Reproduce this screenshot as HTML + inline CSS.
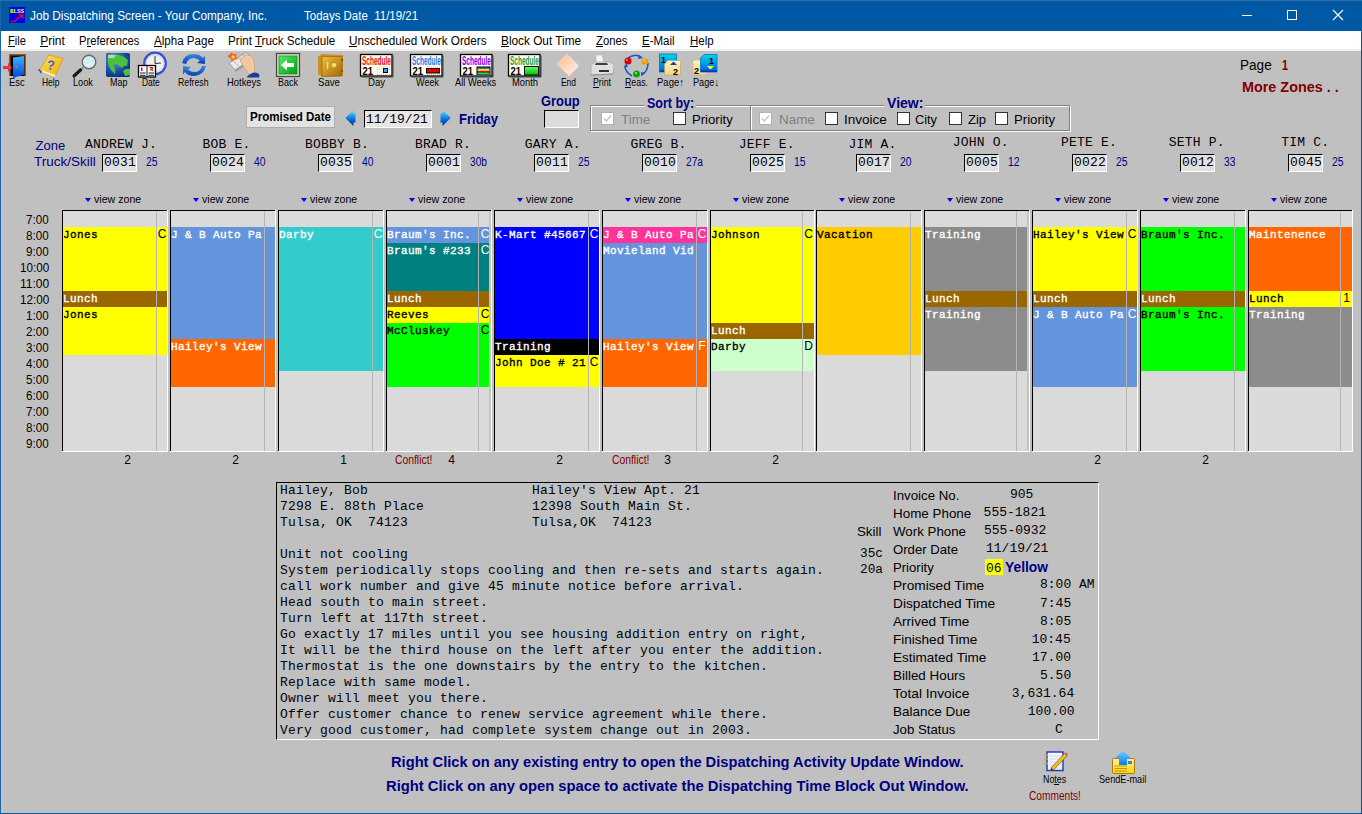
<!DOCTYPE html><html><head><meta charset="utf-8"><style>html,body{margin:0;padding:0;}body{width:1362px;height:814px;position:relative;overflow:hidden;background:#c0c0c0;font-family:"Liberation Sans",sans-serif;}body div,body svg{position:absolute;}</style></head><body><div style="left:0px;top:0px;width:1362px;height:31px;background:#0059a5;"></div><div style="left:0px;top:0px;width:1px;height:814px;background:#1c64a6;"></div><div style="left:1361px;top:0px;width:1px;height:814px;background:#0059a5;"></div><div style="left:0px;top:813px;width:1362px;height:1px;background:#0059a5;"></div><div style="left:0px;top:0px;width:1362px;height:1px;background:#2d6ea8;"></div><svg style="left:9px;top:7px" width="16" height="16" viewBox="0 0 17 17"><rect width="17" height="17" fill="#0000f0"/><text x="1" y="6.5" font-family="Liberation Mono" font-weight="bold" font-size="6.5" fill="#ffff00" textLength="15" lengthAdjust="spacingAndGlyphs">BLSS</text><path d="M1.5 15.5 L6 15.5 L12.5 9" stroke="#e00030" stroke-width="1.6" fill="none"/><path d="M9.5 7.5 L15.5 7.5 L15 13 Z" fill="#e00030"/></svg><div style="top:10px;font-family:'Liberation Sans', sans-serif;font-size:12px;line-height:12px;color:#fff;white-space:pre;left:30px;transform:scaleX(0.9826);transform-origin:0 0;">Job Dispatching Screen - Your Company, Inc.</div><div style="top:10px;font-family:'Liberation Sans', sans-serif;font-size:12px;line-height:12px;color:#fff;white-space:pre;left:304px;transform:scaleX(0.9569);transform-origin:0 0;">Todays Date  11/19/21</div><div style="left:1242px;top:15px;width:10px;height:1px;background:#fff;"></div><div style="left:1287px;top:10px;width:8px;height:8px;border:1px solid #fff"></div><svg style="left:1332px;top:9px" width="12" height="12" viewBox="0 0 12 12"><path d="M1 1 L11 11 M11 1 L1 11" stroke="#fff" stroke-width="1.1"/></svg><div style="left:1px;top:31px;width:1360px;height:18px;background:#fff;"></div><div style="left:1px;top:49px;width:1360px;height:2px;background:#f0f0f0;"></div><div style="top:35px;font-family:'Liberation Sans', sans-serif;font-size:12px;line-height:12px;color:#000;white-space:pre;left:8px;transform:scaleX(0.9254);transform-origin:0 0;">File</div><div style="left:8px;top:46px;width:7px;height:1px;background:#000;"></div><div style="top:35px;font-family:'Liberation Sans', sans-serif;font-size:12px;line-height:12px;color:#000;white-space:pre;left:40.2px;">Print</div><div style="left:40px;top:46px;width:8px;height:1px;background:#000;"></div><div style="top:35px;font-family:'Liberation Sans', sans-serif;font-size:12px;line-height:12px;color:#000;white-space:pre;left:79.3px;transform:scaleX(0.9322);transform-origin:0 0;">Preferences</div><div style="left:87px;top:46px;width:4px;height:1px;background:#000;"></div><div style="top:35px;font-family:'Liberation Sans', sans-serif;font-size:12px;line-height:12px;color:#000;white-space:pre;left:153.8px;transform:scaleX(0.9640);transform-origin:0 0;">Alpha Page</div><div style="left:154px;top:46px;width:8px;height:1px;background:#000;"></div><div style="top:35px;font-family:'Liberation Sans', sans-serif;font-size:12px;line-height:12px;color:#000;white-space:pre;left:227.9px;transform:scaleX(0.9693);transform-origin:0 0;">Print Truck Schedule</div><div style="left:255px;top:46px;width:7px;height:1px;background:#000;"></div><div style="top:35px;font-family:'Liberation Sans', sans-serif;font-size:12px;line-height:12px;color:#000;white-space:pre;left:349px;transform:scaleX(0.9741);transform-origin:0 0;">Unscheduled Work Orders</div><div style="left:349px;top:46px;width:8px;height:1px;background:#000;"></div><div style="top:35px;font-family:'Liberation Sans', sans-serif;font-size:12px;line-height:12px;color:#000;white-space:pre;left:501.3px;transform:scaleX(0.9847);transform-origin:0 0;">Block Out Time</div><div style="left:501px;top:46px;width:8px;height:1px;background:#000;"></div><div style="top:35px;font-family:'Liberation Sans', sans-serif;font-size:12px;line-height:12px;color:#000;white-space:pre;left:596px;transform:scaleX(0.9417);transform-origin:0 0;">Zones</div><div style="left:596px;top:46px;width:7px;height:1px;background:#000;"></div><div style="top:35px;font-family:'Liberation Sans', sans-serif;font-size:12px;line-height:12px;color:#000;white-space:pre;left:642.2px;transform:scaleX(0.9584);transform-origin:0 0;">E-Mail</div><div style="left:642px;top:46px;width:8px;height:1px;background:#000;"></div><div style="top:35px;font-family:'Liberation Sans', sans-serif;font-size:12px;line-height:12px;color:#000;white-space:pre;left:690.2px;transform:scaleX(0.9600);transform-origin:0 0;">Help</div><div style="left:690px;top:46px;width:8px;height:1px;background:#000;"></div><div style="top:77px;font-family:'Liberation Sans', sans-serif;font-size:11px;line-height:11px;color:#000;white-space:pre;left:8.60px;transform:scaleX(0.8504);transform-origin:0 0;">Esc</div><div style="top:77px;font-family:'Liberation Sans', sans-serif;font-size:11px;line-height:11px;color:#000;white-space:pre;left:41.60px;transform:scaleX(0.7691);transform-origin:0 0;">Help</div><div style="top:77px;font-family:'Liberation Sans', sans-serif;font-size:11px;line-height:11px;color:#000;white-space:pre;left:73.25px;transform:scaleX(0.8335);transform-origin:0 0;">Look</div><div style="top:77px;font-family:'Liberation Sans', sans-serif;font-size:11px;line-height:11px;color:#000;white-space:pre;left:109.70px;transform:scaleX(0.8128);transform-origin:0 0;">Map</div><div style="top:77px;font-family:'Liberation Sans', sans-serif;font-size:11px;line-height:11px;color:#000;white-space:pre;left:142.45px;transform:scaleX(0.7613);transform-origin:0 0;">Date</div><div style="top:77px;font-family:'Liberation Sans', sans-serif;font-size:11px;line-height:11px;color:#000;white-space:pre;left:178.40px;transform:scaleX(0.7942);transform-origin:0 0;">Refresh</div><div style="top:77px;font-family:'Liberation Sans', sans-serif;font-size:11px;line-height:11px;color:#000;white-space:pre;left:227.00px;transform:scaleX(0.8553);transform-origin:0 0;">Hotkeys</div><div style="top:77px;font-family:'Liberation Sans', sans-serif;font-size:11px;line-height:11px;color:#000;white-space:pre;left:278.00px;transform:scaleX(0.8174);transform-origin:0 0;">Back</div><div style="top:77px;font-family:'Liberation Sans', sans-serif;font-size:11px;line-height:11px;color:#000;white-space:pre;left:318.00px;transform:scaleX(0.8767);transform-origin:0 0;">Save</div><div style="top:77px;font-family:'Liberation Sans', sans-serif;font-size:11px;line-height:11px;color:#000;white-space:pre;left:368.00px;transform:scaleX(0.8690);transform-origin:0 0;">Day</div><div style="top:77px;font-family:'Liberation Sans', sans-serif;font-size:11px;line-height:11px;color:#000;white-space:pre;left:415.50px;transform:scaleX(0.8237);transform-origin:0 0;">Week</div><div style="top:77px;font-family:'Liberation Sans', sans-serif;font-size:11px;line-height:11px;color:#000;white-space:pre;left:455.40px;transform:scaleX(0.8459);transform-origin:0 0;">All Weeks</div><div style="top:77px;font-family:'Liberation Sans', sans-serif;font-size:11px;line-height:11px;color:#000;white-space:pre;left:512.00px;transform:scaleX(0.8498);transform-origin:0 0;">Month</div><div style="top:77px;font-family:'Liberation Sans', sans-serif;font-size:11px;line-height:11px;color:#000;white-space:pre;left:561.00px;transform:scaleX(0.7656);transform-origin:0 0;">End</div><div style="top:77px;font-family:'Liberation Sans', sans-serif;font-size:11px;line-height:11px;color:#000;white-space:pre;left:593.00px;transform:scaleX(0.7956);transform-origin:0 0;">Print</div><div style="top:77px;font-family:'Liberation Sans', sans-serif;font-size:11px;line-height:11px;color:#000;white-space:pre;left:625.00px;transform:scaleX(0.8000);transform-origin:0 0;">Reas.</div><div style="top:77px;font-family:'Liberation Sans', sans-serif;font-size:11px;line-height:11px;color:#000;white-space:pre;left:657.00px;transform:scaleX(0.8649);transform-origin:0 0;">Page↑</div><div style="top:77px;font-family:'Liberation Sans', sans-serif;font-size:11px;line-height:11px;color:#000;white-space:pre;left:693.00px;transform:scaleX(0.8328);transform-origin:0 0;">Page↓</div><div style="left:593px;top:87px;width:6px;height:1px;background:#000;"></div><div style="left:625px;top:87px;width:6px;height:1px;background:#000;"></div><svg style="left:0;top:50px" width="730" height="30" viewBox="0 50 730 30">
<defs>
<linearGradient id="gdoor" x1="0" y1="0" x2="0" y2="1"><stop offset="0" stop-color="#40b0ff"/><stop offset="1" stop-color="#0048d8"/></linearGradient>
<linearGradient id="gbook" x1="0" y1="0" x2="1" y2="1"><stop offset="0" stop-color="#ffe060"/><stop offset="1" stop-color="#f0b000"/></linearGradient>
<radialGradient id="gglobe" cx="0.35" cy="0.3" r="0.8"><stop offset="0" stop-color="#60a0e0"/><stop offset="0.6" stop-color="#1850a8"/><stop offset="1" stop-color="#0a2a70"/></radialGradient>
<linearGradient id="gref" x1="0" y1="0" x2="0" y2="1"><stop offset="0" stop-color="#3a8ae8"/><stop offset="1" stop-color="#0840b0"/></linearGradient>
<linearGradient id="ggreen" x1="0" y1="0" x2="1" y2="1"><stop offset="0" stop-color="#50f060"/><stop offset="1" stop-color="#00a018"/></linearGradient>
<linearGradient id="gsafe" x1="0" y1="0" x2="1" y2="1"><stop offset="0" stop-color="#f0c040"/><stop offset="1" stop-color="#a06808"/></linearGradient>
<linearGradient id="gend" x1="0" y1="0" x2="1" y2="1"><stop offset="0" stop-color="#ffc090"/><stop offset="1" stop-color="#fff0e8"/></linearGradient>
<linearGradient id="gpg1" x1="0" y1="0" x2="1" y2="1"><stop offset="0" stop-color="#00d8f0"/><stop offset="1" stop-color="#0060e0"/></linearGradient>
<linearGradient id="gpg2" x1="0" y1="0" x2="1" y2="1"><stop offset="0" stop-color="#fff0b0"/><stop offset="1" stop-color="#f8d880"/></linearGradient>
</defs>
<!-- Esc door -->
<rect x="9" y="54" width="17" height="22" fill="#a05a10"/>
<rect x="10.5" y="55.5" width="14" height="20.5" fill="#000"/>
<path d="M13 57.5 L24 56 L24 74.5 L13 78 Z" fill="url(#gdoor)"/>
<rect x="15.5" y="66" width="1.5" height="1.5" fill="#d09040"/>
<path d="M3 66 L8 66 L8 62.5 L12 67.5 L8 72 L8 69 L3 69 Z" fill="#f03040"/>
<!-- Help book -->
<path d="M49 55 L63 58.5 L54.5 77 L39 71 Z" fill="url(#gbook)" stroke="#d09000" stroke-width="0.6"/>
<path d="M39 71 L54.5 77 L55.5 75 L40 69.5 Z" fill="#f8f0d0"/>
<path d="M39 70 L41 74 L42 70.5 Z" fill="#2050e0"/>
<rect x="38.5" y="69" width="1.5" height="2" fill="#e02020"/>
<text x="47" y="69.5" font-family="Liberation Sans" font-weight="bold" font-size="13" fill="#4060f0" transform="rotate(8 51 64)">?</text>
<!-- Look magnifier -->
<circle cx="89" cy="62" r="6.8" fill="#d4ecf8" stroke="#6a6a6a" stroke-width="1.4"/>
<path d="M85 65 Q89 67 92 63" stroke="#f8f8f8" stroke-width="1" fill="none"/>
<path d="M83.5 67.5 L80 70.5" stroke="#909090" stroke-width="2"/>
<path d="M80.5 70 L74 76" stroke="#1a1a1a" stroke-width="3.2" stroke-linecap="round"/>
<!-- Map globe -->
<rect x="106" y="53" width="24" height="24" rx="2" fill="url(#gglobe)"/>
<path d="M108 58 Q112 54 119 55 Q124 56 128 60 L127 66 Q124 65 122 68 L119 66 Q117 63 113 65 Q116 69 115 74 L111 70 Q108 66 108 62 Z" fill="#4cc040"/>
<path d="M123 71 Q126 68 130 69 L130 75 L125 76 Z" fill="#4cc040"/>
<path d="M108 55 Q112 54 116 55 L114 58 Q110 58 108 58 Z" fill="#b0e0a0"/>
<!-- Date clock+calendar -->
<circle cx="155" cy="63.5" r="10.8" fill="#f0f0f0" stroke="#3a50d0" stroke-width="2.2"/>
<circle cx="155" cy="63.5" r="8.6" fill="none" stroke="#c8c8d8" stroke-width="0.8"/>
<path d="M155 56 L155 63.5 L161 63" stroke="#303030" stroke-width="1" fill="none"/>
<rect x="138.5" y="65.5" width="17" height="11.5" fill="#fff" stroke="#000" stroke-width="1.3"/>
<rect x="141" y="67.5" width="1.5" height="3.5" fill="#e00000"/>
<path d="M149.5 67.5 H152.5 V69 H150.5 V70 H152.5 V71" stroke="#e00000" stroke-width="1" fill="none"/>
<path d="M140 73 H145.5 M140 75.3 H145.5 M148.5 73 H154 M148.5 75.3 H154" stroke="#000" stroke-width="0.9"/>
<path d="M147 66 V77" stroke="#000" stroke-width="0.9"/>
<!-- Refresh -->
<path d="M182 63 Q184 54 194 54 Q200 54 203 58 L205 55.5 L205 64 L197 63 L200 60.5 Q197 58 193.5 58 Q188 58 186 64 Z" fill="url(#gref)"/>
<path d="M206 66 Q204 75 194 76 Q188 76 185 72 L183 74.5 L183 66 L191 67 L188 69.5 Q191 72 194.5 72 Q200 72 202 66 Z" fill="url(#gref)"/>
<!-- Hotkeys -->
<path d="M229 63 L246.5 52.5 L252.5 58.5 L235 70 Z" fill="#e8e8e8" stroke="#8a8a8a" stroke-width="0.7"/>
<path d="M235 70 L252.5 58.5 L252.5 61 L235.5 72 Z" fill="#9a9a9a"/>
<path d="M233 60.5 L239 66.5 M238 57.5 L244 63.5 M243 54.5 L249 60.5" stroke="#9a9a9a" stroke-width="0.7"/>
<path d="M227 56 L230 54.5 L231.5 52.5 L233.5 54.5 L236.5 53.5 L236 57 L238 59 L234 59.5 L231.5 61 L231 58.5 Z" fill="#ff5a10"/>
<circle cx="233" cy="57" r="1.8" fill="#ffd830"/>
<path d="M241 62 Q240 57.5 243.5 57 Q245 54 248.5 55 Q252.5 55.5 253.5 59.5 Q255.5 66 254.5 71 L250 75 Q246.5 72 245 68 Q242 65.5 241 62 Z" fill="#f2c8a0" stroke="#c49070" stroke-width="0.6"/>
<path d="M246.5 77.5 Q249 73.5 254.5 72.5 Q258.5 72.5 259.5 75 L259 77.5 Z" fill="#1a3c9c"/>
<!-- Back -->
<rect x="276.5" y="53.5" width="23" height="23" fill="#d0d8c0" stroke="#404840" stroke-width="1.2"/>
<rect x="279" y="56" width="18" height="18" fill="url(#ggreen)" stroke="#108010" stroke-width="0.6"/>
<path d="M281 65 L287 59.5 L287 63 L294 63 L294 67 L287 67 L287 70.5 Z" fill="#fff"/>
<!-- Save safe -->
<path d="M318 57 L322 54 L343 55 L343 76 L322 77 L318 74 Z" fill="#c89020"/>
<path d="M322 56.5 L342 56.5 L342 76 L322 76.5 Z" fill="url(#gsafe)" stroke="#905808" stroke-width="0.6"/>
<circle cx="334" cy="65" r="2.6" fill="#ffe070" stroke="#b08010" stroke-width="0.6"/>
<rect x="327" y="62" width="1.2" height="7" fill="#ffe880"/>
<rect x="341" y="59" width="2" height="2" fill="#805000"/>
<rect x="341" y="70" width="2" height="2" fill="#805000"/>
</svg>
<svg style="left:355px;top:50px" width="375" height="30" viewBox="355 50 375 30">
<defs>
<linearGradient id="gend2" x1="0" y1="0" x2="1" y2="1"><stop offset="0" stop-color="#ffbb88"/><stop offset="1" stop-color="#fff4ee"/></linearGradient>
<linearGradient id="gpga" x1="0" y1="0" x2="0" y2="1"><stop offset="0" stop-color="#00d8e8"/><stop offset="0.85" stop-color="#0070e0"/><stop offset="1" stop-color="#0000d0"/></linearGradient>
<linearGradient id="gpgb" x1="0" y1="0" x2="0" y2="1"><stop offset="0" stop-color="#fff4c0"/><stop offset="1" stop-color="#f4d480"/></linearGradient>
<linearGradient id="gmon" x1="0" y1="0" x2="0" y2="1"><stop offset="0" stop-color="#60ff60"/><stop offset="1" stop-color="#00c000"/></linearGradient>
</defs>
<!-- schedule icons -->
<g id="sch">
<rect x="360.5" y="54.5" width="31.5" height="21.5" fill="#fffcf0" stroke="#000" stroke-width="1.3"/>
<path d="M361.5 77 H393 V55.5" stroke="#404040" stroke-width="1" fill="none"/>
<text x="362" y="65" font-family="Liberation Sans" font-weight="bold" font-size="12" fill="#f01010" textLength="29" lengthAdjust="spacingAndGlyphs">Schedule</text>
<text x="362.5" y="74.5" font-family="Liberation Sans" font-weight="bold" font-size="11" fill="#000" textLength="10.5" lengthAdjust="spacingAndGlyphs">21</text>
<path d="M377 67 H390 M377 69.5 H390 M377 72 H390 M377 74.5 H390" stroke="#a0a0a0" stroke-width="0.6" stroke-dasharray="1 1"/>
<rect x="383.5" y="68.5" width="4" height="4" fill="#30a0ff" stroke="#000" stroke-width="1"/>
</g>
<rect x="410.5" y="54.5" width="31.5" height="21.5" fill="#fffcf0" stroke="#000" stroke-width="1.3"/>
<path d="M411.5 77 H443 V55.5" stroke="#404040" stroke-width="1" fill="none"/>
<text x="412" y="65" font-family="Liberation Sans" font-weight="bold" font-size="12" fill="#2080e8" textLength="29" lengthAdjust="spacingAndGlyphs">Schedule</text>
<text x="412.5" y="74.5" font-family="Liberation Sans" font-weight="bold" font-size="11" fill="#000" textLength="10.5" lengthAdjust="spacingAndGlyphs">21</text>
<path d="M427 67 H440 M427 74.5 H440" stroke="#a0a0a0" stroke-width="0.6" stroke-dasharray="1 1"/>
<rect x="426.5" y="68.5" width="13" height="4.5" fill="#e80000" stroke="#000" stroke-width="1"/>
<rect x="460.5" y="54.5" width="31.5" height="21.5" fill="#fffcf0" stroke="#000" stroke-width="1.3"/>
<path d="M461.5 77 H493 V55.5" stroke="#404040" stroke-width="1" fill="none"/>
<text x="462" y="65" font-family="Liberation Sans" font-weight="bold" font-size="12" fill="#8000f0" textLength="29" lengthAdjust="spacingAndGlyphs">Schedule</text>
<text x="462.5" y="74.5" font-family="Liberation Sans" font-weight="bold" font-size="11" fill="#000" textLength="10.5" lengthAdjust="spacingAndGlyphs">21</text>
<rect x="476.5" y="66.5" width="14" height="8.5" fill="#000"/>
<rect x="477.5" y="67.5" width="12" height="1.6" fill="#3070f0"/>
<rect x="477.5" y="69.1" width="12" height="1.8" fill="#ffff00"/>
<rect x="477.5" y="70.9" width="12" height="1.8" fill="#f00000"/>
<rect x="477.5" y="72.7" width="12" height="1.8" fill="#00f090"/>
<rect x="508.5" y="54.5" width="31.5" height="21.5" fill="#fffcf0" stroke="#000" stroke-width="1.3"/>
<path d="M509.5 77 H541 V55.5" stroke="#404040" stroke-width="1" fill="none"/>
<text x="510" y="65" font-family="Liberation Sans" font-weight="bold" font-size="12" fill="#20a040" textLength="29" lengthAdjust="spacingAndGlyphs">Schedule</text>
<text x="510.5" y="74.5" font-family="Liberation Sans" font-weight="bold" font-size="11" fill="#000" textLength="10.5" lengthAdjust="spacingAndGlyphs">21</text>
<rect x="524.5" y="66.5" width="14" height="8.5" fill="url(#gmon)" stroke="#000" stroke-width="1"/>
<!-- End -->
<path d="M567 54 L579 66 L569 76 L557 64 Z" fill="url(#gend2)" stroke="#f0d8c8" stroke-width="0.6"/>
<!-- Print -->
<path d="M596 55 L602 55 L604 63 L596 63 Z" fill="#f4f4f4" stroke="#b8b8b8" stroke-width="0.6"/>
<path d="M591 66 Q592 62 597 62 L610 62 Q614 63 614 67 L613 74 L591 75 Z" fill="#e0e0e0" stroke="#a0a0a0" stroke-width="0.7"/>
<path d="M596 63 L607 63 L608 65 L595 65 Z" fill="#404040"/>
<rect x="599" y="70" width="10" height="2" fill="#303030"/>
<path d="M591 75 L613 74" stroke="#909090" stroke-width="1"/>
<!-- Reas -->
<path d="M628 58 Q635 53 641 57 M648 63 Q648 71 642 75 M632 76 Q625 72 625 66" stroke="#1858d0" stroke-width="1.6" fill="none"/>
<path d="M639 55 L643 58 L638 59 Z M645 73 L641 76 L641 72 Z M624 67 L626 63 L628 67 Z" fill="#1858d0"/>
<circle cx="628" cy="61" r="3.5" fill="#d80000"/><circle cx="627" cy="60" r="1" fill="#ff8080"/>
<circle cx="645" cy="61.5" r="3.3" fill="#f0a000"/><circle cx="644.5" cy="60.5" r="1" fill="#ffe060"/>
<circle cx="636.5" cy="74" r="3.5" fill="#10a010"/><circle cx="636" cy="73" r="1" fill="#80ff80"/>
<!-- Page up -->
<rect x="659.5" y="54" width="17" height="18" fill="url(#gpga)" stroke="#0070c0" stroke-width="0.8"/>
<text x="661" y="63" font-family="Liberation Sans" font-weight="bold" font-size="9" fill="#000">1</text>
<path d="M668 60.5 L679.5 60.5 L680.5 61.5 L680.5 75 L664.5 75 L664.5 64 Z" fill="url(#gpgb)" stroke="#c0a060" stroke-width="0.6"/>
<path d="M670 65 L673.5 61.5 L677 65 Z" fill="#1040d0"/>
<text x="673" y="74.5" font-family="Liberation Sans" font-weight="bold" font-size="9" fill="#000">2</text>
<!-- Page down -->
<rect x="693" y="60" width="14" height="15" fill="url(#gpgb)" stroke="#d0b070" stroke-width="0.6"/>
<text x="694" y="74" font-family="Liberation Sans" font-weight="bold" font-size="9" fill="#000">2</text>
<path d="M704 54.5 L717 54.5 L717 72 L700.5 72 L700.5 58 Z" fill="url(#gpga)" stroke="#0070c0" stroke-width="0.8"/>
<text x="709" y="63.5" font-family="Liberation Sans" font-weight="bold" font-size="9" fill="#000">1</text>
<path d="M707 66 L714 66 L710.5 69.5 Z" fill="#ffff00"/>
</svg>
<svg style="left:1040px;top:748px" width="100" height="28" viewBox="1040 748 100 28">
<defs><linearGradient id="gmail" x1="0" y1="0" x2="0" y2="1"><stop offset="0" stop-color="#fff0a0"/><stop offset="1" stop-color="#ffd800"/></linearGradient>
<linearGradient id="garr" x1="0" y1="0" x2="0" y2="1"><stop offset="0" stop-color="#80d0ff"/><stop offset="1" stop-color="#0080e0"/></linearGradient></defs>
<!-- Notes -->
<rect x="1047" y="752" width="16" height="18.5" fill="#f4f8ff" stroke="#1838c0" stroke-width="1.4"/>
<path d="M1049 756 H1062 M1049 759 H1062 M1049 762 H1062 M1049 765 H1062 M1049 768 H1062" stroke="#b8c8f0" stroke-width="0.7"/>
<path d="M1044.5 755 H1048 M1044.5 759 H1048 M1044.5 763.5 H1048" stroke="#d0a020" stroke-width="1.4"/>
<path d="M1051 768 L1064.5 753.5 L1067 756 L1053.5 770 Z" fill="#f0c020" stroke="#704000" stroke-width="0.6"/>
<path d="M1064.5 753.5 L1066 752 L1068 754.5 L1067 756 Z" fill="#f06060"/>
<path d="M1051 768 L1050.5 770.5 L1053.5 770 Z" fill="#303030"/>
<!-- Send email -->
<rect x="1112.5" y="758.5" width="22" height="15" rx="1" fill="url(#gmail)" stroke="#a06000" stroke-width="0.8"/>
<path d="M1114.5 766 H1127 M1114.5 768.5 H1127 M1114.5 771 H1127" stroke="#b07010" stroke-width="0.7"/>
<rect x="1128" y="761" width="4" height="3" fill="#3080f0"/>
<path d="M1123 750 L1131 758.5 L1127 758.5 L1127 765 L1119 765 L1119 758.5 L1115 758.5 Z" fill="url(#garr)"/>
</svg>
<div style="top:58px;font-family:'Liberation Sans', sans-serif;font-size:14px;line-height:14px;color:#000;white-space:pre;left:1239.6px;transform:scaleX(0.9698);transform-origin:0 0;">Page</div><div style="top:58px;font-family:'Liberation Sans', sans-serif;font-size:14px;line-height:14px;color:#800000;white-space:pre;font-weight:bold;left:1281.7px;transform:scaleX(0.7711);transform-origin:0 0;">1</div><div style="top:80px;font-family:'Liberation Sans', sans-serif;font-size:14px;line-height:14px;color:#800000;white-space:pre;font-weight:bold;left:1241.7px;transform:scaleX(1.0277);transform-origin:0 0;">More Zones . .</div><div style="left:246px;top:106px;width:87px;height:20px;background:#e3e3e3;border:1px solid #adadad"></div><div style="top:111px;font-family:'Liberation Sans', sans-serif;font-size:12px;line-height:12px;color:#000;white-space:pre;font-weight:bold;left:250px;transform:scaleX(0.9641);transform-origin:0 0;">Promised Date</div><svg style="left:344px;top:109px" width="110" height="18" viewBox="344 109 110 18"><defs><linearGradient id="garw" x1="0" y1="0" x2="0" y2="1"><stop offset="0" stop-color="#50e8ff"/><stop offset="0.5" stop-color="#1080e0"/><stop offset="1" stop-color="#0020a0"/></linearGradient></defs><path d="M345.3 118 L353.5 110 L353.5 113.5 L355.5 113.5 L355.5 122.5 L353.5 122.5 L353.5 126 Z" fill="url(#garw)"/><path d="M450.8 118 L442.5 110 L442.5 113.5 L440.5 113.5 L440.5 122.5 L442.5 122.5 L442.5 126 Z" fill="url(#garw)"/></svg><div style="left:364px;top:110px;width:66px;height:16px;background:#e6e6e6;border-left:1px solid #000;border-top:1px solid #000;border-right:1px solid #fff;border-bottom:1px solid #fff"></div><div style="top:113px;font-family:'Liberation Mono', monospace;font-size:13px;line-height:13px;color:#000;white-space:pre;left:366.4px;transform:scaleX(0.9908);transform-origin:0 0;">11/19/21</div><div style="top:112px;font-family:'Liberation Sans', sans-serif;font-size:14px;line-height:14px;color:#000080;white-space:pre;font-weight:bold;left:459.4px;transform:scaleX(0.9310);transform-origin:0 0;">Friday</div><div style="top:94px;font-family:'Liberation Sans', sans-serif;font-size:14px;line-height:14px;color:#000080;white-space:pre;font-weight:bold;left:541px;transform:scaleX(0.9218);transform-origin:0 0;">Group</div><div style="left:544px;top:110px;width:33px;height:16px;background:#dcdcdc;border-left:1px solid #000;border-top:1px solid #000;border-right:1px solid #fff;border-bottom:1px solid #fff"></div><div style="left:590px;top:105px;width:159px;height:24px;border:1px solid #808080;box-shadow:1px 1px 0 #fff, inset 1px 1px 0 #fff"></div><div style="left:750px;top:105px;width:318px;height:24px;border:1px solid #808080;box-shadow:1px 1px 0 #fff, inset 1px 1px 0 #fff"></div><div style="left:644px;top:100px;width:52px;height:8px;background:#c0c0c0;"></div><div style="top:96px;font-family:'Liberation Sans', sans-serif;font-size:14px;line-height:14px;color:#000080;white-space:pre;font-weight:bold;left:646.5px;transform:scaleX(0.8927);transform-origin:0 0;">Sort by:</div><div style="left:884px;top:100px;width:41px;height:8px;background:#c0c0c0;"></div><div style="top:96px;font-family:'Liberation Sans', sans-serif;font-size:14px;line-height:14px;color:#000080;white-space:pre;font-weight:bold;left:886.5px;transform:scaleX(1.0052);transform-origin:0 0;">View:</div><div style="left:601px;top:112px;width:11px;height:11px;background:#fff;border:1px solid #b0b0b0"></div><svg style="left:602px;top:113px" width="11" height="11" viewBox="0 0 11 11"><path d="M2 5.5 L4.5 8 L9 2.5" stroke="#c4c4c4" stroke-width="1.3" fill="none"/></svg><div style="top:113px;font-family:'Liberation Sans', sans-serif;font-size:13px;line-height:13px;color:#808080;white-space:pre;left:620.8px;transform:scaleX(1.0279);transform-origin:0 0;">Time</div><div style="left:673px;top:112px;width:11px;height:11px;background:#fff;border:1px solid #333"></div><div style="top:113px;font-family:'Liberation Sans', sans-serif;font-size:13px;line-height:13px;color:#000;white-space:pre;left:692px;transform:scaleX(1.0086);transform-origin:0 0;">Priority</div><div style="left:759px;top:112px;width:11px;height:11px;background:#fff;border:1px solid #b0b0b0"></div><svg style="left:760px;top:113px" width="11" height="11" viewBox="0 0 11 11"><path d="M2 5.5 L4.5 8 L9 2.5" stroke="#c4c4c4" stroke-width="1.3" fill="none"/></svg><div style="top:113px;font-family:'Liberation Sans', sans-serif;font-size:13px;line-height:13px;color:#808080;white-space:pre;left:778.6px;transform:scaleX(1.0321);transform-origin:0 0;">Name</div><div style="left:825px;top:112px;width:11px;height:11px;background:#fff;border:1px solid #333"></div><div style="top:113px;font-family:'Liberation Sans', sans-serif;font-size:13px;line-height:13px;color:#000;white-space:pre;left:843.6px;transform:scaleX(1.0412);transform-origin:0 0;">Invoice</div><div style="left:897px;top:112px;width:11px;height:11px;background:#fff;border:1px solid #333"></div><div style="top:113px;font-family:'Liberation Sans', sans-serif;font-size:13px;line-height:13px;color:#000;white-space:pre;left:915px;transform:scaleX(0.9826);transform-origin:0 0;">City</div><div style="left:949px;top:112px;width:11px;height:11px;background:#fff;border:1px solid #333"></div><div style="top:113px;font-family:'Liberation Sans', sans-serif;font-size:13px;line-height:13px;color:#000;white-space:pre;left:968px;">Zip</div><div style="left:995px;top:112px;width:11px;height:11px;background:#fff;border:1px solid #333"></div><div style="top:113px;font-family:'Liberation Sans', sans-serif;font-size:13px;line-height:13px;color:#000;white-space:pre;left:1014px;transform:scaleX(1.0135);transform-origin:0 0;">Priority</div><div style="top:139px;font-family:'Liberation Sans', sans-serif;font-size:13px;line-height:13px;color:#000080;white-space:pre;left:35.5px;">Zone</div><div style="top:155px;font-family:'Liberation Sans', sans-serif;font-size:13px;line-height:13px;color:#000080;white-space:pre;left:33.6px;transform:scaleX(1.0375);transform-origin:0 0;">Truck/Skill</div><div style="top:138px;font-family:'Liberation Mono', monospace;font-size:13px;line-height:13px;color:#000;white-space:pre;letter-spacing:0.2px;left:85.1px;">ANDREW J.</div><div style="left:102px;top:154px;width:33px;height:16px;background:#e0e0e0;border-left:1px solid #000;border-top:1px solid #000;border-right:1px solid #fff;border-bottom:1px solid #fff"></div><div style="top:156px;font-family:'Liberation Mono', monospace;font-size:13px;line-height:13px;color:#000;white-space:pre;letter-spacing:0.2px;left:104px;">0031</div><div style="top:156px;font-family:'Liberation Sans', sans-serif;font-size:12px;line-height:12px;color:#000080;white-space:pre;left:146px;transform:scaleX(0.8618);transform-origin:0 0;">25</div><svg style="left:85px;top:198px" width="6" height="4" viewBox="0 0 6 4"><path d="M0 0 L6 0 L3 4 Z" fill="#0000ff"/></svg><div style="top:194px;font-family:'Liberation Sans', sans-serif;font-size:11px;line-height:11px;color:#000;white-space:pre;left:94px;transform:scaleX(0.9645);transform-origin:0 0;">view zone</div><div style="top:138px;font-family:'Liberation Mono', monospace;font-size:13px;line-height:13px;color:#000;white-space:pre;letter-spacing:0.2px;left:202.5px;">BOB E.</div><div style="left:210px;top:154px;width:33px;height:16px;background:#e0e0e0;border-left:1px solid #000;border-top:1px solid #000;border-right:1px solid #fff;border-bottom:1px solid #fff"></div><div style="top:156px;font-family:'Liberation Mono', monospace;font-size:13px;line-height:13px;color:#000;white-space:pre;letter-spacing:0.2px;left:212px;">0024</div><div style="top:156px;font-family:'Liberation Sans', sans-serif;font-size:12px;line-height:12px;color:#000080;white-space:pre;left:254px;transform:scaleX(0.8618);transform-origin:0 0;">40</div><svg style="left:193px;top:198px" width="6" height="4" viewBox="0 0 6 4"><path d="M0 0 L6 0 L3 4 Z" fill="#0000ff"/></svg><div style="top:194px;font-family:'Liberation Sans', sans-serif;font-size:11px;line-height:11px;color:#000;white-space:pre;left:202px;transform:scaleX(0.9645);transform-origin:0 0;">view zone</div><div style="top:138px;font-family:'Liberation Mono', monospace;font-size:13px;line-height:13px;color:#000;white-space:pre;letter-spacing:0.2px;left:304.9px;">BOBBY B.</div><div style="left:318px;top:154px;width:33px;height:16px;background:#e0e0e0;border-left:1px solid #000;border-top:1px solid #000;border-right:1px solid #fff;border-bottom:1px solid #fff"></div><div style="top:156px;font-family:'Liberation Mono', monospace;font-size:13px;line-height:13px;color:#000;white-space:pre;letter-spacing:0.2px;left:320px;">0035</div><div style="top:156px;font-family:'Liberation Sans', sans-serif;font-size:12px;line-height:12px;color:#000080;white-space:pre;left:362px;transform:scaleX(0.8618);transform-origin:0 0;">40</div><svg style="left:301px;top:198px" width="6" height="4" viewBox="0 0 6 4"><path d="M0 0 L6 0 L3 4 Z" fill="#0000ff"/></svg><div style="top:194px;font-family:'Liberation Sans', sans-serif;font-size:11px;line-height:11px;color:#000;white-space:pre;left:310px;transform:scaleX(0.9645);transform-origin:0 0;">view zone</div><div style="top:138px;font-family:'Liberation Mono', monospace;font-size:13px;line-height:13px;color:#000;white-space:pre;letter-spacing:0.2px;left:415px;">BRAD R.</div><div style="left:426px;top:154px;width:33px;height:16px;background:#e0e0e0;border-left:1px solid #000;border-top:1px solid #000;border-right:1px solid #fff;border-bottom:1px solid #fff"></div><div style="top:156px;font-family:'Liberation Mono', monospace;font-size:13px;line-height:13px;color:#000;white-space:pre;letter-spacing:0.2px;left:428px;">0001</div><div style="top:156px;font-family:'Liberation Sans', sans-serif;font-size:12px;line-height:12px;color:#000080;white-space:pre;left:470px;transform:scaleX(0.8493);transform-origin:0 0;">30b</div><svg style="left:409px;top:198px" width="6" height="4" viewBox="0 0 6 4"><path d="M0 0 L6 0 L3 4 Z" fill="#0000ff"/></svg><div style="top:194px;font-family:'Liberation Sans', sans-serif;font-size:11px;line-height:11px;color:#000;white-space:pre;left:418px;transform:scaleX(0.9645);transform-origin:0 0;">view zone</div><div style="top:138px;font-family:'Liberation Mono', monospace;font-size:13px;line-height:13px;color:#000;white-space:pre;letter-spacing:0.2px;left:524.7px;">GARY A.</div><div style="left:534px;top:154px;width:33px;height:16px;background:#e0e0e0;border-left:1px solid #000;border-top:1px solid #000;border-right:1px solid #fff;border-bottom:1px solid #fff"></div><div style="top:156px;font-family:'Liberation Mono', monospace;font-size:13px;line-height:13px;color:#000;white-space:pre;letter-spacing:0.2px;left:536px;">0011</div><div style="top:156px;font-family:'Liberation Sans', sans-serif;font-size:12px;line-height:12px;color:#000080;white-space:pre;left:578px;transform:scaleX(0.8618);transform-origin:0 0;">25</div><svg style="left:517px;top:198px" width="6" height="4" viewBox="0 0 6 4"><path d="M0 0 L6 0 L3 4 Z" fill="#0000ff"/></svg><div style="top:194px;font-family:'Liberation Sans', sans-serif;font-size:11px;line-height:11px;color:#000;white-space:pre;left:526px;transform:scaleX(0.9645);transform-origin:0 0;">view zone</div><div style="top:138px;font-family:'Liberation Mono', monospace;font-size:13px;line-height:13px;color:#000;white-space:pre;letter-spacing:0.2px;left:630.4px;">GREG B.</div><div style="left:642px;top:154px;width:33px;height:16px;background:#e0e0e0;border-left:1px solid #000;border-top:1px solid #000;border-right:1px solid #fff;border-bottom:1px solid #fff"></div><div style="top:156px;font-family:'Liberation Mono', monospace;font-size:13px;line-height:13px;color:#000;white-space:pre;letter-spacing:0.2px;left:644px;">0010</div><div style="top:156px;font-family:'Liberation Sans', sans-serif;font-size:12px;line-height:12px;color:#000080;white-space:pre;left:686px;transform:scaleX(0.8493);transform-origin:0 0;">27a</div><svg style="left:625px;top:198px" width="6" height="4" viewBox="0 0 6 4"><path d="M0 0 L6 0 L3 4 Z" fill="#0000ff"/></svg><div style="top:194px;font-family:'Liberation Sans', sans-serif;font-size:11px;line-height:11px;color:#000;white-space:pre;left:634px;transform:scaleX(0.9645);transform-origin:0 0;">view zone</div><div style="top:138px;font-family:'Liberation Mono', monospace;font-size:13px;line-height:13px;color:#000;white-space:pre;letter-spacing:0.2px;left:738.8px;">JEFF E.</div><div style="left:750px;top:154px;width:33px;height:16px;background:#e0e0e0;border-left:1px solid #000;border-top:1px solid #000;border-right:1px solid #fff;border-bottom:1px solid #fff"></div><div style="top:156px;font-family:'Liberation Mono', monospace;font-size:13px;line-height:13px;color:#000;white-space:pre;letter-spacing:0.2px;left:752px;">0025</div><div style="top:156px;font-family:'Liberation Sans', sans-serif;font-size:12px;line-height:12px;color:#000080;white-space:pre;left:794px;transform:scaleX(0.8618);transform-origin:0 0;">15</div><svg style="left:733px;top:198px" width="6" height="4" viewBox="0 0 6 4"><path d="M0 0 L6 0 L3 4 Z" fill="#0000ff"/></svg><div style="top:194px;font-family:'Liberation Sans', sans-serif;font-size:11px;line-height:11px;color:#000;white-space:pre;left:742px;transform:scaleX(0.9645);transform-origin:0 0;">view zone</div><div style="top:138px;font-family:'Liberation Mono', monospace;font-size:13px;line-height:13px;color:#000;white-space:pre;letter-spacing:0.2px;left:848.5px;">JIM A.</div><div style="left:856px;top:154px;width:33px;height:16px;background:#e0e0e0;border-left:1px solid #000;border-top:1px solid #000;border-right:1px solid #fff;border-bottom:1px solid #fff"></div><div style="top:156px;font-family:'Liberation Mono', monospace;font-size:13px;line-height:13px;color:#000;white-space:pre;letter-spacing:0.2px;left:858px;">0017</div><div style="top:156px;font-family:'Liberation Sans', sans-serif;font-size:12px;line-height:12px;color:#000080;white-space:pre;left:900px;transform:scaleX(0.8618);transform-origin:0 0;">20</div><svg style="left:839px;top:198px" width="6" height="4" viewBox="0 0 6 4"><path d="M0 0 L6 0 L3 4 Z" fill="#0000ff"/></svg><div style="top:194px;font-family:'Liberation Sans', sans-serif;font-size:11px;line-height:11px;color:#000;white-space:pre;left:848px;transform:scaleX(0.9645);transform-origin:0 0;">view zone</div><div style="top:136px;font-family:'Liberation Mono', monospace;font-size:13px;line-height:13px;color:#000;white-space:pre;letter-spacing:0.2px;left:952.8px;">JOHN O.</div><div style="left:964px;top:154px;width:33px;height:16px;background:#e0e0e0;border-left:1px solid #000;border-top:1px solid #000;border-right:1px solid #fff;border-bottom:1px solid #fff"></div><div style="top:156px;font-family:'Liberation Mono', monospace;font-size:13px;line-height:13px;color:#000;white-space:pre;letter-spacing:0.2px;left:966px;">0005</div><div style="top:156px;font-family:'Liberation Sans', sans-serif;font-size:12px;line-height:12px;color:#000080;white-space:pre;left:1008px;transform:scaleX(0.8618);transform-origin:0 0;">12</div><svg style="left:947px;top:198px" width="6" height="4" viewBox="0 0 6 4"><path d="M0 0 L6 0 L3 4 Z" fill="#0000ff"/></svg><div style="top:194px;font-family:'Liberation Sans', sans-serif;font-size:11px;line-height:11px;color:#000;white-space:pre;left:956px;transform:scaleX(0.9645);transform-origin:0 0;">view zone</div><div style="top:136px;font-family:'Liberation Mono', monospace;font-size:13px;line-height:13px;color:#000;white-space:pre;letter-spacing:0.2px;left:1060.9px;">PETE E.</div><div style="left:1072px;top:154px;width:33px;height:16px;background:#e0e0e0;border-left:1px solid #000;border-top:1px solid #000;border-right:1px solid #fff;border-bottom:1px solid #fff"></div><div style="top:156px;font-family:'Liberation Mono', monospace;font-size:13px;line-height:13px;color:#000;white-space:pre;letter-spacing:0.2px;left:1074px;">0022</div><div style="top:156px;font-family:'Liberation Sans', sans-serif;font-size:12px;line-height:12px;color:#000080;white-space:pre;left:1116px;transform:scaleX(0.8618);transform-origin:0 0;">25</div><svg style="left:1055px;top:198px" width="6" height="4" viewBox="0 0 6 4"><path d="M0 0 L6 0 L3 4 Z" fill="#0000ff"/></svg><div style="top:194px;font-family:'Liberation Sans', sans-serif;font-size:11px;line-height:11px;color:#000;white-space:pre;left:1064px;transform:scaleX(0.9645);transform-origin:0 0;">view zone</div><div style="top:136px;font-family:'Liberation Mono', monospace;font-size:13px;line-height:13px;color:#000;white-space:pre;letter-spacing:0.2px;left:1168.8px;">SETH P.</div><div style="left:1180px;top:154px;width:33px;height:16px;background:#e0e0e0;border-left:1px solid #000;border-top:1px solid #000;border-right:1px solid #fff;border-bottom:1px solid #fff"></div><div style="top:156px;font-family:'Liberation Mono', monospace;font-size:13px;line-height:13px;color:#000;white-space:pre;letter-spacing:0.2px;left:1182px;">0012</div><div style="top:156px;font-family:'Liberation Sans', sans-serif;font-size:12px;line-height:12px;color:#000080;white-space:pre;left:1224px;transform:scaleX(0.8618);transform-origin:0 0;">33</div><svg style="left:1163px;top:198px" width="6" height="4" viewBox="0 0 6 4"><path d="M0 0 L6 0 L3 4 Z" fill="#0000ff"/></svg><div style="top:194px;font-family:'Liberation Sans', sans-serif;font-size:11px;line-height:11px;color:#000;white-space:pre;left:1172px;transform:scaleX(0.9645);transform-origin:0 0;">view zone</div><div style="top:136px;font-family:'Liberation Mono', monospace;font-size:13px;line-height:13px;color:#000;white-space:pre;letter-spacing:0.2px;left:1281.2px;">TIM C.</div><div style="left:1288px;top:154px;width:33px;height:16px;background:#e0e0e0;border-left:1px solid #000;border-top:1px solid #000;border-right:1px solid #fff;border-bottom:1px solid #fff"></div><div style="top:156px;font-family:'Liberation Mono', monospace;font-size:13px;line-height:13px;color:#000;white-space:pre;letter-spacing:0.2px;left:1290px;">0045</div><div style="top:156px;font-family:'Liberation Sans', sans-serif;font-size:12px;line-height:12px;color:#000080;white-space:pre;left:1332px;transform:scaleX(0.8618);transform-origin:0 0;">25</div><svg style="left:1271px;top:198px" width="6" height="4" viewBox="0 0 6 4"><path d="M0 0 L6 0 L3 4 Z" fill="#0000ff"/></svg><div style="top:194px;font-family:'Liberation Sans', sans-serif;font-size:11px;line-height:11px;color:#000;white-space:pre;left:1280px;transform:scaleX(0.9645);transform-origin:0 0;">view zone</div><div style="top:213px;font-family:'Liberation Sans', sans-serif;font-size:13px;line-height:13px;color:#000;white-space:pre;left:26.40px;transform:scaleX(0.8928);transform-origin:0 0;">7:00</div><div style="top:229px;font-family:'Liberation Sans', sans-serif;font-size:13px;line-height:13px;color:#000;white-space:pre;left:26.40px;transform:scaleX(0.8928);transform-origin:0 0;">8:00</div><div style="top:245px;font-family:'Liberation Sans', sans-serif;font-size:13px;line-height:13px;color:#000;white-space:pre;left:26.40px;transform:scaleX(0.8928);transform-origin:0 0;">9:00</div><div style="top:261px;font-family:'Liberation Sans', sans-serif;font-size:13px;line-height:13px;color:#000;white-space:pre;left:19.80px;transform:scaleX(0.8972);transform-origin:0 0;">10:00</div><div style="top:277px;font-family:'Liberation Sans', sans-serif;font-size:13px;line-height:13px;color:#000;white-space:pre;left:19.80px;transform:scaleX(0.9247);transform-origin:0 0;">11:00</div><div style="top:293px;font-family:'Liberation Sans', sans-serif;font-size:13px;line-height:13px;color:#000;white-space:pre;left:19.80px;transform:scaleX(0.8972);transform-origin:0 0;">12:00</div><div style="top:309px;font-family:'Liberation Sans', sans-serif;font-size:13px;line-height:13px;color:#000;white-space:pre;left:26.40px;transform:scaleX(0.8928);transform-origin:0 0;">1:00</div><div style="top:325px;font-family:'Liberation Sans', sans-serif;font-size:13px;line-height:13px;color:#000;white-space:pre;left:26.40px;transform:scaleX(0.8928);transform-origin:0 0;">2:00</div><div style="top:341px;font-family:'Liberation Sans', sans-serif;font-size:13px;line-height:13px;color:#000;white-space:pre;left:26.40px;transform:scaleX(0.8928);transform-origin:0 0;">3:00</div><div style="top:357px;font-family:'Liberation Sans', sans-serif;font-size:13px;line-height:13px;color:#000;white-space:pre;left:26.40px;transform:scaleX(0.8928);transform-origin:0 0;">4:00</div><div style="top:373px;font-family:'Liberation Sans', sans-serif;font-size:13px;line-height:13px;color:#000;white-space:pre;left:26.40px;transform:scaleX(0.8928);transform-origin:0 0;">5:00</div><div style="top:389px;font-family:'Liberation Sans', sans-serif;font-size:13px;line-height:13px;color:#000;white-space:pre;left:26.40px;transform:scaleX(0.8928);transform-origin:0 0;">6:00</div><div style="top:405px;font-family:'Liberation Sans', sans-serif;font-size:13px;line-height:13px;color:#000;white-space:pre;left:26.40px;transform:scaleX(0.8928);transform-origin:0 0;">7:00</div><div style="top:421px;font-family:'Liberation Sans', sans-serif;font-size:13px;line-height:13px;color:#000;white-space:pre;left:26.40px;transform:scaleX(0.8928);transform-origin:0 0;">8:00</div><div style="top:437px;font-family:'Liberation Sans', sans-serif;font-size:13px;line-height:13px;color:#000;white-space:pre;left:26.40px;transform:scaleX(0.8928);transform-origin:0 0;">9:00</div><div style="left:62px;top:210px;width:105px;height:1px;background:#000;"></div><div style="left:62px;top:210px;width:1px;height:241px;background:#000;"></div><div style="left:167px;top:210px;width:1px;height:242px;background:#fff;"></div><div style="left:62px;top:451px;width:106px;height:1px;background:#fff;"></div><div style="left:63px;top:211px;width:104px;height:240px;background:#dadada;"></div><div style="left:63px;top:227px;width:104px;height:128px;background:#ffff00;"></div><div style="left:63px;top:291px;width:104px;height:16px;background:#996600;"></div><div style="left:156px;top:211px;width:1px;height:240px;background:#b4b4b4;"></div><div style="top:230px;font-family:'Liberation Mono', monospace;font-size:11px;line-height:11px;color:#000;white-space:pre;letter-spacing:0.4px;left:63px;-webkit-text-stroke:0.35px #000;">Jones</div><div style="top:228px;font-family:'Liberation Sans', sans-serif;font-size:12px;line-height:12px;color:#000;white-space:pre;left:157.66px;">C</div><div style="top:294px;font-family:'Liberation Mono', monospace;font-size:11px;line-height:11px;color:#fff;white-space:pre;letter-spacing:0.4px;left:63px;-webkit-text-stroke:0.35px #fff;">Lunch</div><div style="top:310px;font-family:'Liberation Mono', monospace;font-size:11px;line-height:11px;color:#000;white-space:pre;letter-spacing:0.4px;left:63px;-webkit-text-stroke:0.35px #000;">Jones</div><div style="left:170px;top:210px;width:105px;height:1px;background:#000;"></div><div style="left:170px;top:210px;width:1px;height:241px;background:#000;"></div><div style="left:275px;top:210px;width:1px;height:242px;background:#fff;"></div><div style="left:170px;top:451px;width:106px;height:1px;background:#fff;"></div><div style="left:171px;top:211px;width:104px;height:240px;background:#dadada;"></div><div style="left:171px;top:227px;width:104px;height:112px;background:#6495dc;"></div><div style="left:171px;top:339px;width:104px;height:48px;background:#ff6600;"></div><div style="left:264px;top:211px;width:1px;height:240px;background:#b4b4b4;"></div><div style="top:230px;font-family:'Liberation Mono', monospace;font-size:11px;line-height:11px;color:#fff;white-space:pre;letter-spacing:0.4px;left:171px;-webkit-text-stroke:0.35px #fff;">J &amp; B Auto Pa</div><div style="top:342px;font-family:'Liberation Mono', monospace;font-size:11px;line-height:11px;color:#fff;white-space:pre;letter-spacing:0.4px;left:171px;-webkit-text-stroke:0.35px #fff;">Hailey&#x27;s View</div><div style="left:278px;top:210px;width:105px;height:1px;background:#000;"></div><div style="left:278px;top:210px;width:1px;height:241px;background:#000;"></div><div style="left:383px;top:210px;width:1px;height:242px;background:#fff;"></div><div style="left:278px;top:451px;width:106px;height:1px;background:#fff;"></div><div style="left:279px;top:211px;width:104px;height:240px;background:#dadada;"></div><div style="left:279px;top:227px;width:104px;height:144px;background:#33cccc;"></div><div style="left:372px;top:211px;width:1px;height:240px;background:#b4b4b4;"></div><div style="top:230px;font-family:'Liberation Mono', monospace;font-size:11px;line-height:11px;color:#fff;white-space:pre;letter-spacing:0.4px;left:279px;-webkit-text-stroke:0.35px #fff;">Darby</div><div style="top:228px;font-family:'Liberation Sans', sans-serif;font-size:12px;line-height:12px;color:#fff;white-space:pre;left:373.66px;">C</div><div style="left:386px;top:210px;width:105px;height:1px;background:#000;"></div><div style="left:386px;top:210px;width:1px;height:241px;background:#000;"></div><div style="left:491px;top:210px;width:1px;height:242px;background:#fff;"></div><div style="left:386px;top:451px;width:106px;height:1px;background:#fff;"></div><div style="left:489px;top:211px;width:2px;height:240px;background:#c4c4c4;"></div><div style="left:387px;top:211px;width:102px;height:240px;background:#dadada;"></div><div style="left:387px;top:227px;width:102px;height:16px;background:#6495dc;"></div><div style="left:387px;top:243px;width:102px;height:48px;background:#008080;"></div><div style="left:387px;top:291px;width:102px;height:16px;background:#996600;"></div><div style="left:387px;top:307px;width:102px;height:16px;background:#ffff00;"></div><div style="left:387px;top:323px;width:102px;height:64px;background:#00ff00;"></div><div style="left:478px;top:211px;width:1px;height:240px;background:#b4b4b4;"></div><div style="top:230px;font-family:'Liberation Mono', monospace;font-size:11px;line-height:11px;color:#fff;white-space:pre;letter-spacing:0.4px;left:387px;-webkit-text-stroke:0.35px #fff;">Braum&#x27;s Inc.</div><div style="top:228px;font-family:'Liberation Sans', sans-serif;font-size:12px;line-height:12px;color:#fff;white-space:pre;left:480.66px;">C</div><div style="top:246px;font-family:'Liberation Mono', monospace;font-size:11px;line-height:11px;color:#fff;white-space:pre;letter-spacing:0.4px;left:387px;-webkit-text-stroke:0.35px #fff;">Braum&#x27;s #233</div><div style="top:244px;font-family:'Liberation Sans', sans-serif;font-size:12px;line-height:12px;color:#fff;white-space:pre;left:480.66px;">C</div><div style="top:294px;font-family:'Liberation Mono', monospace;font-size:11px;line-height:11px;color:#fff;white-space:pre;letter-spacing:0.4px;left:387px;-webkit-text-stroke:0.35px #fff;">Lunch</div><div style="top:310px;font-family:'Liberation Mono', monospace;font-size:11px;line-height:11px;color:#000;white-space:pre;letter-spacing:0.4px;left:387px;-webkit-text-stroke:0.35px #000;">Reeves</div><div style="top:308px;font-family:'Liberation Sans', sans-serif;font-size:12px;line-height:12px;color:#000;white-space:pre;left:480.66px;">C</div><div style="top:326px;font-family:'Liberation Mono', monospace;font-size:11px;line-height:11px;color:#000;white-space:pre;letter-spacing:0.4px;left:387px;-webkit-text-stroke:0.35px #000;">McCluskey</div><div style="top:324px;font-family:'Liberation Sans', sans-serif;font-size:12px;line-height:12px;color:#000;white-space:pre;left:480.66px;">C</div><div style="left:494px;top:210px;width:105px;height:1px;background:#000;"></div><div style="left:494px;top:210px;width:1px;height:241px;background:#000;"></div><div style="left:599px;top:210px;width:1px;height:242px;background:#fff;"></div><div style="left:494px;top:451px;width:106px;height:1px;background:#fff;"></div><div style="left:495px;top:211px;width:104px;height:240px;background:#dadada;"></div><div style="left:495px;top:227px;width:104px;height:112px;background:#0000ff;"></div><div style="left:495px;top:339px;width:104px;height:16px;background:#000000;"></div><div style="left:495px;top:355px;width:104px;height:32px;background:#ffff00;"></div><div style="left:588px;top:211px;width:1px;height:240px;background:#b4b4b4;"></div><div style="top:230px;font-family:'Liberation Mono', monospace;font-size:11px;line-height:11px;color:#fff;white-space:pre;letter-spacing:0.4px;left:495px;-webkit-text-stroke:0.35px #fff;">K-Mart #45667</div><div style="top:228px;font-family:'Liberation Sans', sans-serif;font-size:12px;line-height:12px;color:#fff;white-space:pre;left:589.66px;">C</div><div style="top:342px;font-family:'Liberation Mono', monospace;font-size:11px;line-height:11px;color:#fff;white-space:pre;letter-spacing:0.4px;left:495px;-webkit-text-stroke:0.35px #fff;">Training</div><div style="top:358px;font-family:'Liberation Mono', monospace;font-size:11px;line-height:11px;color:#000;white-space:pre;letter-spacing:0.4px;left:495px;-webkit-text-stroke:0.35px #000;">John Doe # 21</div><div style="top:356px;font-family:'Liberation Sans', sans-serif;font-size:12px;line-height:12px;color:#000;white-space:pre;left:589.66px;">C</div><div style="left:602px;top:210px;width:105px;height:1px;background:#000;"></div><div style="left:602px;top:210px;width:1px;height:241px;background:#000;"></div><div style="left:707px;top:210px;width:1px;height:242px;background:#fff;"></div><div style="left:602px;top:451px;width:106px;height:1px;background:#fff;"></div><div style="left:603px;top:211px;width:104px;height:240px;background:#dadada;"></div><div style="left:603px;top:227px;width:104px;height:16px;background:#ff3399;"></div><div style="left:603px;top:243px;width:104px;height:96px;background:#6495dc;"></div><div style="left:603px;top:339px;width:104px;height:48px;background:#ff6600;"></div><div style="left:696px;top:211px;width:1px;height:240px;background:#b4b4b4;"></div><div style="top:230px;font-family:'Liberation Mono', monospace;font-size:11px;line-height:11px;color:#fff;white-space:pre;letter-spacing:0.4px;left:603px;-webkit-text-stroke:0.35px #fff;">J &amp; B Auto Pa</div><div style="top:228px;font-family:'Liberation Sans', sans-serif;font-size:12px;line-height:12px;color:#fff;white-space:pre;left:697.66px;">C</div><div style="top:246px;font-family:'Liberation Mono', monospace;font-size:11px;line-height:11px;color:#fff;white-space:pre;letter-spacing:0.4px;left:603px;-webkit-text-stroke:0.35px #fff;">Movieland Vid</div><div style="top:342px;font-family:'Liberation Mono', monospace;font-size:11px;line-height:11px;color:#fff;white-space:pre;letter-spacing:0.4px;left:603px;-webkit-text-stroke:0.35px #fff;">Hailey&#x27;s View</div><div style="top:340px;font-family:'Liberation Sans', sans-serif;font-size:12px;line-height:12px;color:#fff;white-space:pre;left:698.34px;">F</div><div style="left:710px;top:210px;width:104px;height:1px;background:#000;"></div><div style="left:710px;top:210px;width:1px;height:241px;background:#000;"></div><div style="left:814px;top:210px;width:1px;height:242px;background:#fff;"></div><div style="left:710px;top:451px;width:105px;height:1px;background:#fff;"></div><div style="left:711px;top:211px;width:103px;height:240px;background:#dadada;"></div><div style="left:711px;top:227px;width:103px;height:96px;background:#ffff00;"></div><div style="left:711px;top:323px;width:103px;height:16px;background:#996600;"></div><div style="left:711px;top:339px;width:103px;height:32px;background:#ccffcc;"></div><div style="left:802px;top:211px;width:1px;height:240px;background:#b4b4b4;"></div><div style="top:230px;font-family:'Liberation Mono', monospace;font-size:11px;line-height:11px;color:#000;white-space:pre;letter-spacing:0.4px;left:711px;-webkit-text-stroke:0.35px #000;">Johnson</div><div style="top:228px;font-family:'Liberation Sans', sans-serif;font-size:12px;line-height:12px;color:#000;white-space:pre;left:804.16px;">C</div><div style="top:326px;font-family:'Liberation Mono', monospace;font-size:11px;line-height:11px;color:#fff;white-space:pre;letter-spacing:0.4px;left:711px;-webkit-text-stroke:0.35px #fff;">Lunch</div><div style="top:342px;font-family:'Liberation Mono', monospace;font-size:11px;line-height:11px;color:#000;white-space:pre;letter-spacing:0.4px;left:711px;-webkit-text-stroke:0.35px #000;">Darby</div><div style="top:340px;font-family:'Liberation Sans', sans-serif;font-size:12px;line-height:12px;color:#000;white-space:pre;left:804.16px;">D</div><div style="left:816px;top:210px;width:105px;height:1px;background:#000;"></div><div style="left:816px;top:210px;width:1px;height:241px;background:#000;"></div><div style="left:921px;top:210px;width:1px;height:242px;background:#fff;"></div><div style="left:816px;top:451px;width:106px;height:1px;background:#fff;"></div><div style="left:817px;top:211px;width:104px;height:240px;background:#dadada;"></div><div style="left:817px;top:227px;width:104px;height:128px;background:#ffcc00;"></div><div style="left:910px;top:211px;width:1px;height:240px;background:#b4b4b4;"></div><div style="top:230px;font-family:'Liberation Mono', monospace;font-size:11px;line-height:11px;color:#000;white-space:pre;letter-spacing:0.4px;left:817px;-webkit-text-stroke:0.35px #000;">Vacation</div><div style="left:924px;top:210px;width:105px;height:1px;background:#000;"></div><div style="left:924px;top:210px;width:1px;height:241px;background:#000;"></div><div style="left:1029px;top:210px;width:1px;height:242px;background:#fff;"></div><div style="left:924px;top:451px;width:106px;height:1px;background:#fff;"></div><div style="left:1027px;top:211px;width:2px;height:240px;background:#c4c4c4;"></div><div style="left:925px;top:211px;width:102px;height:240px;background:#dadada;"></div><div style="left:925px;top:227px;width:102px;height:64px;background:#8c8c8c;"></div><div style="left:925px;top:291px;width:102px;height:16px;background:#996600;"></div><div style="left:925px;top:307px;width:102px;height:64px;background:#8c8c8c;"></div><div style="left:1016px;top:211px;width:1px;height:240px;background:#b4b4b4;"></div><div style="top:230px;font-family:'Liberation Mono', monospace;font-size:11px;line-height:11px;color:#fff;white-space:pre;letter-spacing:0.4px;left:925px;-webkit-text-stroke:0.35px #fff;">Training</div><div style="top:294px;font-family:'Liberation Mono', monospace;font-size:11px;line-height:11px;color:#fff;white-space:pre;letter-spacing:0.4px;left:925px;-webkit-text-stroke:0.35px #fff;">Lunch</div><div style="top:310px;font-family:'Liberation Mono', monospace;font-size:11px;line-height:11px;color:#fff;white-space:pre;letter-spacing:0.4px;left:925px;-webkit-text-stroke:0.35px #fff;">Training</div><div style="left:1032px;top:210px;width:105px;height:1px;background:#000;"></div><div style="left:1032px;top:210px;width:1px;height:241px;background:#000;"></div><div style="left:1137px;top:210px;width:1px;height:242px;background:#fff;"></div><div style="left:1032px;top:451px;width:106px;height:1px;background:#fff;"></div><div style="left:1033px;top:211px;width:104px;height:240px;background:#dadada;"></div><div style="left:1033px;top:227px;width:104px;height:64px;background:#ffff00;"></div><div style="left:1033px;top:291px;width:104px;height:16px;background:#996600;"></div><div style="left:1033px;top:307px;width:104px;height:80px;background:#6495dc;"></div><div style="left:1126px;top:211px;width:1px;height:240px;background:#b4b4b4;"></div><div style="top:230px;font-family:'Liberation Mono', monospace;font-size:11px;line-height:11px;color:#000;white-space:pre;letter-spacing:0.4px;left:1033px;-webkit-text-stroke:0.35px #000;">Hailey&#x27;s View</div><div style="top:228px;font-family:'Liberation Sans', sans-serif;font-size:12px;line-height:12px;color:#000;white-space:pre;left:1127.66px;">C</div><div style="top:294px;font-family:'Liberation Mono', monospace;font-size:11px;line-height:11px;color:#fff;white-space:pre;letter-spacing:0.4px;left:1033px;-webkit-text-stroke:0.35px #fff;">Lunch</div><div style="top:310px;font-family:'Liberation Mono', monospace;font-size:11px;line-height:11px;color:#fff;white-space:pre;letter-spacing:0.4px;left:1033px;-webkit-text-stroke:0.35px #fff;">J &amp; B Auto Pa</div><div style="top:308px;font-family:'Liberation Sans', sans-serif;font-size:12px;line-height:12px;color:#fff;white-space:pre;left:1127.66px;">C</div><div style="left:1140px;top:210px;width:105px;height:1px;background:#000;"></div><div style="left:1140px;top:210px;width:1px;height:241px;background:#000;"></div><div style="left:1245px;top:210px;width:1px;height:242px;background:#fff;"></div><div style="left:1140px;top:451px;width:106px;height:1px;background:#fff;"></div><div style="left:1141px;top:211px;width:104px;height:240px;background:#dadada;"></div><div style="left:1141px;top:227px;width:104px;height:64px;background:#00ff00;"></div><div style="left:1141px;top:291px;width:104px;height:16px;background:#996600;"></div><div style="left:1141px;top:307px;width:104px;height:64px;background:#00ff00;"></div><div style="left:1234px;top:211px;width:1px;height:240px;background:#b4b4b4;"></div><div style="top:230px;font-family:'Liberation Mono', monospace;font-size:11px;line-height:11px;color:#000;white-space:pre;letter-spacing:0.4px;left:1141px;-webkit-text-stroke:0.35px #000;">Braum&#x27;s Inc.</div><div style="top:294px;font-family:'Liberation Mono', monospace;font-size:11px;line-height:11px;color:#fff;white-space:pre;letter-spacing:0.4px;left:1141px;-webkit-text-stroke:0.35px #fff;">Lunch</div><div style="top:310px;font-family:'Liberation Mono', monospace;font-size:11px;line-height:11px;color:#000;white-space:pre;letter-spacing:0.4px;left:1141px;-webkit-text-stroke:0.35px #000;">Braum&#x27;s Inc.</div><div style="left:1248px;top:210px;width:104px;height:1px;background:#000;"></div><div style="left:1248px;top:210px;width:1px;height:241px;background:#000;"></div><div style="left:1352px;top:210px;width:1px;height:242px;background:#fff;"></div><div style="left:1248px;top:451px;width:105px;height:1px;background:#fff;"></div><div style="left:1249px;top:211px;width:103px;height:240px;background:#dadada;"></div><div style="left:1249px;top:227px;width:103px;height:64px;background:#ff6600;"></div><div style="left:1249px;top:291px;width:103px;height:16px;background:#ffff00;"></div><div style="left:1249px;top:307px;width:103px;height:80px;background:#8c8c8c;"></div><div style="left:1340px;top:211px;width:1px;height:240px;background:#b4b4b4;"></div><div style="top:230px;font-family:'Liberation Mono', monospace;font-size:11px;line-height:11px;color:#fff;white-space:pre;letter-spacing:0.4px;left:1249px;-webkit-text-stroke:0.35px #fff;">Maintenence</div><div style="top:294px;font-family:'Liberation Mono', monospace;font-size:11px;line-height:11px;color:#000;white-space:pre;letter-spacing:0.4px;left:1249px;-webkit-text-stroke:0.35px #000;">Lunch</div><div style="top:292px;font-family:'Liberation Sans', sans-serif;font-size:12px;line-height:12px;color:#000;white-space:pre;left:1343.16px;">1</div><div style="top:310px;font-family:'Liberation Mono', monospace;font-size:11px;line-height:11px;color:#fff;white-space:pre;letter-spacing:0.4px;left:1249px;-webkit-text-stroke:0.35px #fff;">Training</div><div style="top:454px;font-family:'Liberation Sans', sans-serif;font-size:12px;line-height:12px;color:#000;white-space:pre;left:124.16px;">2</div><div style="top:454px;font-family:'Liberation Sans', sans-serif;font-size:12px;line-height:12px;color:#000;white-space:pre;left:232.16px;">2</div><div style="top:454px;font-family:'Liberation Sans', sans-serif;font-size:12px;line-height:12px;color:#000;white-space:pre;left:340.16px;">1</div><div style="top:454px;font-family:'Liberation Sans', sans-serif;font-size:12px;line-height:12px;color:#000;white-space:pre;left:448.16px;">4</div><div style="top:454px;font-family:'Liberation Sans', sans-serif;font-size:12px;line-height:12px;color:#000;white-space:pre;left:556.16px;">2</div><div style="top:454px;font-family:'Liberation Sans', sans-serif;font-size:12px;line-height:12px;color:#000;white-space:pre;left:664.16px;">3</div><div style="top:454px;font-family:'Liberation Sans', sans-serif;font-size:12px;line-height:12px;color:#000;white-space:pre;left:772.16px;">2</div><div style="top:454px;font-family:'Liberation Sans', sans-serif;font-size:12px;line-height:12px;color:#000;white-space:pre;left:1094.16px;">2</div><div style="top:454px;font-family:'Liberation Sans', sans-serif;font-size:12px;line-height:12px;color:#000;white-space:pre;left:1202.16px;">2</div><div style="top:454px;font-family:'Liberation Sans', sans-serif;font-size:12px;line-height:12px;color:#800000;white-space:pre;left:395px;transform:scaleX(0.8629);transform-origin:0 0;">Conflict!</div><div style="top:454px;font-family:'Liberation Sans', sans-serif;font-size:12px;line-height:12px;color:#800000;white-space:pre;left:611.5px;transform:scaleX(0.8629);transform-origin:0 0;">Conflict!</div><div style="left:276px;top:482px;width:821px;height:256px;border-left:1px solid #000;border-top:1px solid #000;border-right:1px solid #fff;border-bottom:1px solid #fff"></div><div style="top:484px;font-family:'Liberation Mono', monospace;font-size:13px;line-height:13px;color:#000;white-space:pre;letter-spacing:0.2px;left:280px;">Hailey, Bob</div><div style="top:500px;font-family:'Liberation Mono', monospace;font-size:13px;line-height:13px;color:#000;white-space:pre;letter-spacing:0.2px;left:280px;">7298 E. 88th Place</div><div style="top:516px;font-family:'Liberation Mono', monospace;font-size:13px;line-height:13px;color:#000;white-space:pre;letter-spacing:0.2px;left:280px;">Tulsa, OK  74123</div><div style="top:548px;font-family:'Liberation Mono', monospace;font-size:13px;line-height:13px;color:#000;white-space:pre;letter-spacing:0.2px;left:280px;">Unit not cooling</div><div style="top:564px;font-family:'Liberation Mono', monospace;font-size:13px;line-height:13px;color:#000;white-space:pre;letter-spacing:0.2px;left:280px;">System periodically stops cooling and then re-sets and starts again.</div><div style="top:580px;font-family:'Liberation Mono', monospace;font-size:13px;line-height:13px;color:#000;white-space:pre;letter-spacing:0.2px;left:280px;">call work number and give 45 minute notice before arrival.</div><div style="top:596px;font-family:'Liberation Mono', monospace;font-size:13px;line-height:13px;color:#000;white-space:pre;letter-spacing:0.2px;left:280px;">Head south to main street.</div><div style="top:612px;font-family:'Liberation Mono', monospace;font-size:13px;line-height:13px;color:#000;white-space:pre;letter-spacing:0.2px;left:280px;">Turn left at 117th street.</div><div style="top:628px;font-family:'Liberation Mono', monospace;font-size:13px;line-height:13px;color:#000;white-space:pre;letter-spacing:0.2px;left:280px;">Go exactly 17 miles until you see housing addition entry on right,</div><div style="top:644px;font-family:'Liberation Mono', monospace;font-size:13px;line-height:13px;color:#000;white-space:pre;letter-spacing:0.2px;left:280px;">It will be the third house on the left after you enter the addition.</div><div style="top:660px;font-family:'Liberation Mono', monospace;font-size:13px;line-height:13px;color:#000;white-space:pre;letter-spacing:0.2px;left:280px;">Thermostat is the one downstairs by the entry to the kitchen.</div><div style="top:676px;font-family:'Liberation Mono', monospace;font-size:13px;line-height:13px;color:#000;white-space:pre;letter-spacing:0.2px;left:280px;">Replace with same model.</div><div style="top:692px;font-family:'Liberation Mono', monospace;font-size:13px;line-height:13px;color:#000;white-space:pre;letter-spacing:0.2px;left:280px;">Owner will meet you there.</div><div style="top:708px;font-family:'Liberation Mono', monospace;font-size:13px;line-height:13px;color:#000;white-space:pre;letter-spacing:0.2px;left:280px;">Offer customer chance to renew service agreement while there.</div><div style="top:724px;font-family:'Liberation Mono', monospace;font-size:13px;line-height:13px;color:#000;white-space:pre;letter-spacing:0.2px;left:280px;">Very good customer, had complete system change out in 2003.</div><div style="top:484px;font-family:'Liberation Mono', monospace;font-size:13px;line-height:13px;color:#000;white-space:pre;letter-spacing:0.2px;left:532px;">Hailey&#x27;s View Apt. 21</div><div style="top:500px;font-family:'Liberation Mono', monospace;font-size:13px;line-height:13px;color:#000;white-space:pre;letter-spacing:0.2px;left:532px;">12398 South Main St.</div><div style="top:516px;font-family:'Liberation Mono', monospace;font-size:13px;line-height:13px;color:#000;white-space:pre;letter-spacing:0.2px;left:532px;">Tulsa,OK  74123</div><div style="top:525px;font-family:'Liberation Sans', sans-serif;font-size:13px;line-height:13px;color:#000;white-space:pre;left:857.2px;transform:scaleX(1.0233);transform-origin:0 0;">Skill</div><div style="top:548px;font-family:'Liberation Mono', monospace;font-size:12px;line-height:12px;color:#000;white-space:pre;left:860px;transform:scaleX(1.0644);transform-origin:0 0;">35c</div><div style="top:564px;font-family:'Liberation Mono', monospace;font-size:12px;line-height:12px;color:#000;white-space:pre;left:860px;transform:scaleX(1.0644);transform-origin:0 0;">20a</div><div style="top:489px;font-family:'Liberation Sans', sans-serif;font-size:13px;line-height:13px;color:#000;white-space:pre;left:893px;transform:scaleX(1.0208);transform-origin:0 0;">Invoice No.</div><div style="top:507px;font-family:'Liberation Sans', sans-serif;font-size:13px;line-height:13px;color:#000;white-space:pre;left:893px;transform:scaleX(1.0315);transform-origin:0 0;">Home Phone</div><div style="top:525px;font-family:'Liberation Sans', sans-serif;font-size:13px;line-height:13px;color:#000;white-space:pre;left:893px;transform:scaleX(1.0237);transform-origin:0 0;">Work Phone</div><div style="top:543px;font-family:'Liberation Sans', sans-serif;font-size:13px;line-height:13px;color:#000;white-space:pre;left:893px;transform:scaleX(1.0107);transform-origin:0 0;">Order Date</div><div style="top:561px;font-family:'Liberation Sans', sans-serif;font-size:13px;line-height:13px;color:#000;white-space:pre;left:893px;transform:scaleX(1.0086);transform-origin:0 0;">Priority</div><div style="top:579px;font-family:'Liberation Sans', sans-serif;font-size:13px;line-height:13px;color:#000;white-space:pre;left:893px;transform:scaleX(1.0519);transform-origin:0 0;">Promised Time</div><div style="top:597px;font-family:'Liberation Sans', sans-serif;font-size:13px;line-height:13px;color:#000;white-space:pre;left:893px;transform:scaleX(1.0553);transform-origin:0 0;">Dispatched Time</div><div style="top:615px;font-family:'Liberation Sans', sans-serif;font-size:13px;line-height:13px;color:#000;white-space:pre;left:893px;transform:scaleX(1.0457);transform-origin:0 0;">Arrived Time</div><div style="top:633px;font-family:'Liberation Sans', sans-serif;font-size:13px;line-height:13px;color:#000;white-space:pre;left:893px;transform:scaleX(1.0415);transform-origin:0 0;">Finished Time</div><div style="top:651px;font-family:'Liberation Sans', sans-serif;font-size:13px;line-height:13px;color:#000;white-space:pre;left:893px;transform:scaleX(1.0403);transform-origin:0 0;">Estimated Time</div><div style="top:669px;font-family:'Liberation Sans', sans-serif;font-size:13px;line-height:13px;color:#000;white-space:pre;left:893px;transform:scaleX(1.0312);transform-origin:0 0;">Billed Hours</div><div style="top:687px;font-family:'Liberation Sans', sans-serif;font-size:13px;line-height:13px;color:#000;white-space:pre;left:893px;transform:scaleX(1.0556);transform-origin:0 0;">Total Invoice</div><div style="top:705px;font-family:'Liberation Sans', sans-serif;font-size:13px;line-height:13px;color:#000;white-space:pre;left:893px;transform:scaleX(1.0380);transform-origin:0 0;">Balance Due</div><div style="top:723px;font-family:'Liberation Sans', sans-serif;font-size:13px;line-height:13px;color:#000;white-space:pre;left:893px;transform:scaleX(1.0157);transform-origin:0 0;">Job Status</div><div style="top:488px;font-family:'Liberation Mono', monospace;font-size:13px;line-height:13px;color:#000;white-space:pre;left:1010px;">905</div><div style="top:506px;font-family:'Liberation Mono', monospace;font-size:13px;line-height:13px;color:#000;white-space:pre;left:983.6px;">555-1821</div><div style="top:524px;font-family:'Liberation Mono', monospace;font-size:13px;line-height:13px;color:#000;white-space:pre;left:984px;">555-0932</div><div style="top:542px;font-family:'Liberation Mono', monospace;font-size:13px;line-height:13px;color:#000;white-space:pre;left:986px;">11/19/21</div><div style="top:578px;font-family:'Liberation Mono', monospace;font-size:13px;line-height:13px;color:#000;white-space:pre;left:1040px;">8:00 AM</div><div style="top:597px;font-family:'Liberation Mono', monospace;font-size:13px;line-height:13px;color:#000;white-space:pre;left:1040px;">7:45</div><div style="top:615px;font-family:'Liberation Mono', monospace;font-size:13px;line-height:13px;color:#000;white-space:pre;left:1040px;">8:05</div><div style="top:633px;font-family:'Liberation Mono', monospace;font-size:13px;line-height:13px;color:#000;white-space:pre;left:1031.7px;">10:45</div><div style="top:651px;font-family:'Liberation Mono', monospace;font-size:13px;line-height:13px;color:#000;white-space:pre;left:1032px;">17.00</div><div style="top:669px;font-family:'Liberation Mono', monospace;font-size:13px;line-height:13px;color:#000;white-space:pre;left:1040px;">5.50</div><div style="top:687px;font-family:'Liberation Mono', monospace;font-size:13px;line-height:13px;color:#000;white-space:pre;left:1011.8px;">3,631.64</div><div style="top:705px;font-family:'Liberation Mono', monospace;font-size:13px;line-height:13px;color:#000;white-space:pre;left:1027.8px;">100.00</div><div style="top:723px;font-family:'Liberation Mono', monospace;font-size:13px;line-height:13px;color:#000;white-space:pre;left:1055px;">C</div><div style="left:985px;top:559px;width:18px;height:16px;background:#ffff00;"></div><div style="top:562px;font-family:'Liberation Mono', monospace;font-size:13px;line-height:13px;color:#000;white-space:pre;left:986px;">06</div><div style="top:560px;font-family:'Liberation Sans', sans-serif;font-size:14px;line-height:14px;color:#000080;white-space:pre;font-weight:bold;left:1005px;transform:scaleX(0.9867);transform-origin:0 0;">Yellow</div><div style="top:754px;font-family:'Liberation Sans', sans-serif;font-size:15px;line-height:15px;color:#000080;white-space:pre;font-weight:bold;left:390.6px;transform:scaleX(0.9780);transform-origin:0 0;">Right Click on any existing entry to open the Dispatching Activity Update Window.</div><div style="top:778px;font-family:'Liberation Sans', sans-serif;font-size:15px;line-height:15px;color:#000080;white-space:pre;font-weight:bold;left:386.4px;transform:scaleX(0.9849);transform-origin:0 0;">Right Click on any open space to activate the Dispatching Time Block Out Window.</div><div style="top:774px;font-family:'Liberation Sans', sans-serif;font-size:11px;line-height:11px;color:#000;white-space:pre;left:1042.8px;transform:scaleX(0.8070);transform-origin:0 0;">Notes</div><div style="left:1054px;top:784px;width:5px;height:1px;background:#000;"></div><div style="top:790px;font-family:'Liberation Sans', sans-serif;font-size:12px;line-height:12px;color:#800000;white-space:pre;left:1028.7px;transform:scaleX(0.8461);transform-origin:0 0;">Comments!</div><div style="top:774px;font-family:'Liberation Sans', sans-serif;font-size:11px;line-height:11px;color:#000;white-space:pre;left:1099px;transform:scaleX(0.8299);transform-origin:0 0;">SendE-mail</div></body></html>
